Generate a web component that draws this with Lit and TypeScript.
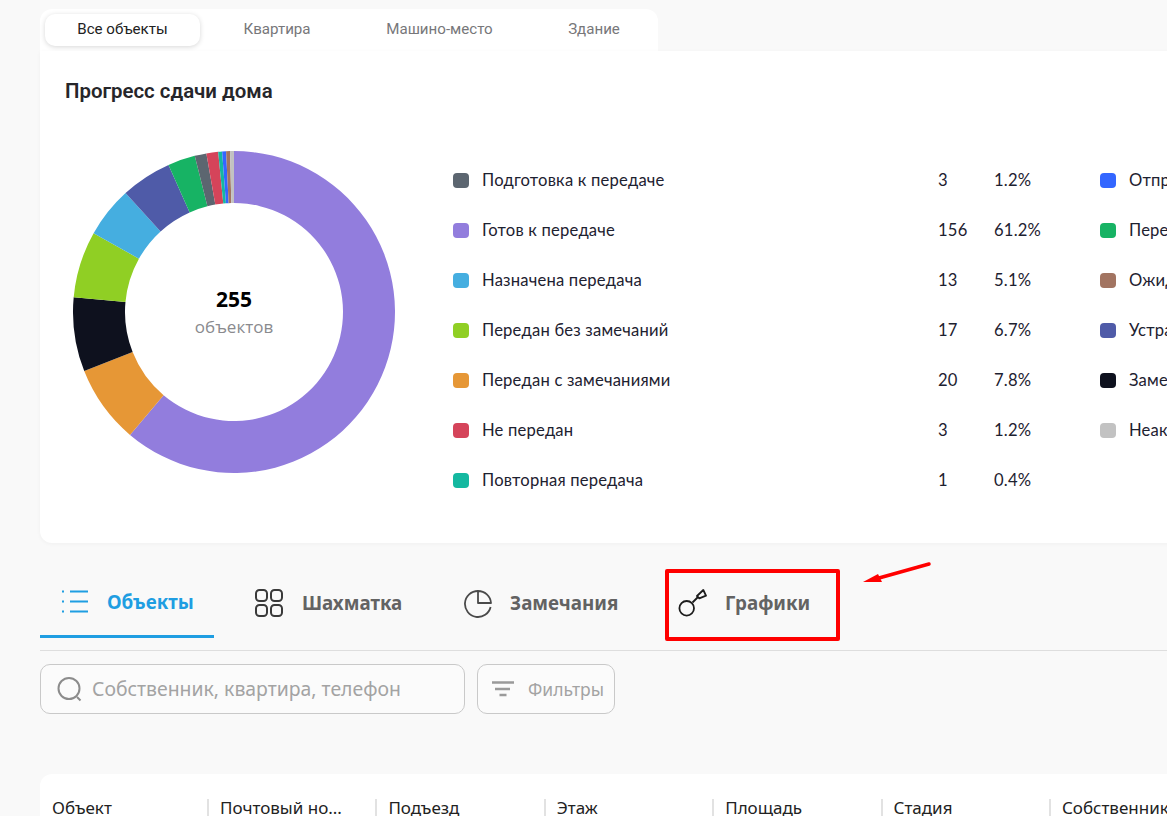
import { LitElement, html, css, svg } from "lit";
import { customElement } from "lit/decorators.js";

const SEGMENTS: [number, string][] = [
  [156, "#927ddd"], [20, "#e69736"], [19, "#0e111e"], [17, "#90cf24"], [13, "#45aee0"],
  [13, "#4f5ba8"], [7, "#17b364"], [3, "#5c6670"], [3, "#d5445a"], [1, "#14b8a0"],
  [1, "#3366ff"], [1, "#a27461"], [1, "#c2c2c2"],
];

const LEFT: [string, string, string, string][] = [
  ["#5c6670", "Подготовка к передаче", "3", "1.2%"],
  ["#927ddd", "Готов к передаче", "156", "61.2%"],
  ["#45aee0", "Назначена передача", "13", "5.1%"],
  ["#90cf24", "Передан без замечаний", "17", "6.7%"],
  ["#e69736", "Передан с замечаниями", "20", "7.8%"],
  ["#d5445a", "Не передан", "3", "1.2%"],
  ["#14b8a0", "Повторная передача", "1", "0.4%"],
];
const RIGHT: [string, string][] = [
  ["#3366ff", "Отправлено приглашение"],
  ["#17b364", "Передан собственнику"],
  ["#a27461", "Ожидание устранения"],
  ["#4f5ba8", "Устранение замечаний"],
  ["#0e111e", "Замечания устранены"],
  ["#c2c2c2", "Неактуально"],
];
const COLS = ["Объект", "Почтовый но...", "Подъезд", "Этаж", "Площадь", "Стадия", "Собственник"];

function arc(a0: number, a1: number): string {
  const R = 161, r = 109, c = 162;
  const pt = (rad: number, a: number) =>
    `${(c + rad * Math.sin(a)).toFixed(2)} ${(c - rad * Math.cos(a)).toFixed(2)}`;
  const large = a1 - a0 > Math.PI ? 1 : 0;
  return `M${pt(R, a0)}A${R} ${R} 0 ${large} 1 ${pt(R, a1)}L${pt(r, a1)}A${r} ${r} 0 ${large} 0 ${pt(r, a0)}Z`;
}

@customElement("app-root")
export class AppRoot extends LitElement {
  static styles = css`
    :host { display: block; position: relative; width: 1167px; height: 816px; overflow: hidden; background: #f9f9f9; font-family: "Noto Sans", sans-serif; }
    .page { display: flex; flex-direction: column; padding: 9px 0 0 40px; width: 1400px; box-sizing: border-box; }
    .types { display: flex; width: 618px; height: 42px; box-sizing: border-box; padding: 5px 0 0 5px; background: #fff; border-radius: 12px 12px 0 0; }
    .type { height: 32px; width: 155px; flex: none; display: flex; align-items: center; justify-content: center; font: 15.100px/1 Roboto, sans-serif; color: #77777a; }
    .type.on { background: #fff; border-radius: 10px; box-shadow: 0 1px 5px rgba(0,0,0,.16); color: #222; }
    .type.t2 { width: 154px; }
    .type.t3 { width: 171px; }
    .type.t4 { width: 138px; }
    .card { background: #fff; border-radius: 0 0 12px 12px; height: 492px; box-sizing: border-box; padding: 28px 25px 0; box-shadow: 0 1px 4px rgba(0,0,0,.04); }
    h2 { margin: 0; font: 600 20.400px/24px Roboto, sans-serif; color: #26262a; }
    .chart { display: flex; margin-top: 47px; margin-left: 7px; }
    .donut { position: relative; width: 324px; height: 324px; flex: none; }
    .donut svg { display: block; }
    .center { position: absolute; inset: 2px 0 0; display: flex; flex-direction: column; align-items: center; justify-content: center; font-family: "Open Sans", sans-serif; }
    .num { font-size: 21px; font-weight: 700; color: #000; line-height: 24px; }
    .lbl { font-size: 17px; color: #8a8a8e; line-height: 24px; margin-top: 4px; }
    .legend { display: flex; margin-left: 57px; padding-top: 5px; }
    .col1 { width: 647px; }
    .row { display: flex; align-items: center; height: 50px; font: 16.600px/20px Lato, "Noto Sans", sans-serif; letter-spacing: .2px; color: #1d2130; }
    .sq { width: 16px; height: 15px; border-radius: 4px; flex: none; margin-right: 13px; }
    .name { width: 456px; white-space: nowrap; }
    .cnt { width: 56px; }
    .nav { display: flex; margin-top: 26px; height: 82px; border-bottom: 1px solid #dedede; box-sizing: border-box; width: 1127px; }
    .nav-item { display: flex; align-items: center; height: 68px; box-sizing: border-box; font: 700 18.800px/24px "Noto Sans", sans-serif; color: #636363; }
    .nav-item svg { flex: none; display: block; }
    .i1 { width: 174px; height: 69px; padding-left: 21px; gap: 16px; color: #1f9ee2; border-bottom: 3px solid #1f9ee2; }
    .i2 { margin-left: 40px; width: 209px; gap: 18px; }
    .i3 { width: 202px; gap: 17px; }
    .i4 { gap: 18px; margin-left: 13px; }
    .tools { display: flex; gap: 12px; margin-top: 13px; }
    .search, .filter { height: 50px; border: 1px solid #c9c9c9; border-radius: 10px; box-sizing: border-box; display: flex; align-items: center; background: #fbfbfb; color: #a3a3a3; white-space: nowrap; }
    .search { width: 425px; padding-left: 15px; gap: 9px; font: 19.400px/24px "Noto Sans", sans-serif; }
    .filter { width: 138px; padding-left: 13px; gap: 11px; font: 17.500px/24px "Noto Sans", sans-serif; }
    .table { margin-top: 60px; background: #fff; border-radius: 12px 12px 0 0; height: 120px; display: flex; padding-top: 25px; box-sizing: border-box; width: 1260px; }
    .th { width: 168.400px; height: 20px; box-sizing: border-box; padding-left: 11px; font: 17px/18px "Noto Sans", sans-serif; color: #222; white-space: nowrap; flex: none; }
    .th:first-child { width: 167px; padding-left: 12px; }
    .th + .th { border-left: 2px solid #e2e2e2; }
    .mark { position: absolute; left: 665px; top: 569px; width: 175px; height: 72px; box-sizing: border-box; border: 4px solid #f00; border-radius: 2px; }
    .arrow { position: absolute; left: 855px; top: 555px; }
  `;

  render() {
    const total = SEGMENTS.reduce((s, x) => s + x[0], 0);
    let acc = 0;
    const paths = SEGMENTS.map(([v, c]) => {
      const a0 = (acc / total) * 2 * Math.PI;
      acc += v;
      const a1 = (acc / total) * 2 * Math.PI;
      return svg`<path d=${arc(a0, a1)} fill=${c}></path>`;
    });
    return html`
      <div class="page">
        <div class="types">
          <div class="type on">Все объекты</div>
          <div class="type t2">Квартира</div>
          <div class="type t3">Машино-место</div>
          <div class="type t4">Здание</div>
        </div>
        <div class="card">
          <h2>Прогресс сдачи дома</h2>
          <div class="chart">
            <div class="donut">
              <svg width="324" height="324" viewBox="0 0 324 324">${paths}</svg>
              <div class="center"><div class="num">255</div><div class="lbl">объектов</div></div>
            </div>
            <div class="legend">
              <div class="col1">
                ${LEFT.map(([c, n, k, p]) => html`<div class="row"><span class="sq" style="background:${c}"></span><span class="name">${n}</span><span class="cnt">${k}</span><span>${p}</span></div>`)}
              </div>
              <div>
                ${RIGHT.map(([c, n]) => html`<div class="row"><span class="sq" style="background:${c}"></span><span class="name">${n}</span></div>`)}
              </div>
            </div>
          </div>
        </div>
        <div class="nav">
          <div class="nav-item i1">
            <svg width="30" height="30" viewBox="0 0 30 30" fill="none" stroke="#1f9ee2" stroke-width="2"><path d="M9 4.500h18M9 14.500h18M9 24.500h18"/><path d="M1 4.500h2M1 14.500h2M1 24.500h2"/></svg>
            Объекты
          </div>
          <div class="nav-item i2">
            <svg width="30" height="30" viewBox="0 0 30 30" fill="none" stroke="#3a3a3a" stroke-width="2"><rect x="2" y="2" width="11" height="11" rx="3.500"/><rect x="17" y="2" width="11" height="11" rx="3.500"/><rect x="2" y="17" width="11" height="11" rx="3.500"/><rect x="17" y="17" width="11" height="11" rx="3.500"/></svg>
            Шахматка
          </div>
          <div class="nav-item i3">
            <svg width="30" height="30" viewBox="0 0 30 30" fill="none" stroke="#4a4a4a" stroke-width="1.800" stroke-linejoin="round"><path d="M15 3A13 13 0 1 0 27.600 19"/><path d="M15 3V15H28A13 13 0 0 0 15 3Z"/></svg>
            Замечания
          </div>
          <div class="nav-item i4">
            <svg width="29" height="30" viewBox="0 0 29 30" fill="none" stroke="#1c1c1c" stroke-width="1.800" stroke-linejoin="round"><circle cx="8.700" cy="20.300" r="7.300"/><path d="M14.500 14.500L20 9"/><path d="M19 8L25.300 2L28 7.700L21.300 10.300Z"/></svg>
            Графики
          </div>
        </div>
        <div class="tools">
          <div class="search">
            <svg width="27" height="27" viewBox="0 0 27 27" fill="none" stroke="#8c8c8c" stroke-width="2"><circle cx="13" cy="12.500" r="10.500"/><path d="M21 21l3.500 3.500"/></svg>
            Собственник, квартира, телефон
          </div>
          <div class="filter">
            <svg width="26" height="16" viewBox="0 0 26 16" fill="none" stroke="#9a9a9a" stroke-width="2.500"><path d="M1 1.500h22M4 8h15M8.500 14h7"/></svg>
            Фильтры
          </div>
        </div>
        <div class="table">${COLS.map((c) => html`<div class="th">${c}</div>`)}</div>
      </div>
      <div class="mark"></div>
      <svg class="arrow" width="85" height="35" viewBox="0 0 85 35"><path d="M74 9L24 23" stroke="#f00" stroke-width="3.500" stroke-linecap="round"/><path d="M8 27L23 19L27 27Z" fill="#f00"/></svg>
    `;
  }
}
